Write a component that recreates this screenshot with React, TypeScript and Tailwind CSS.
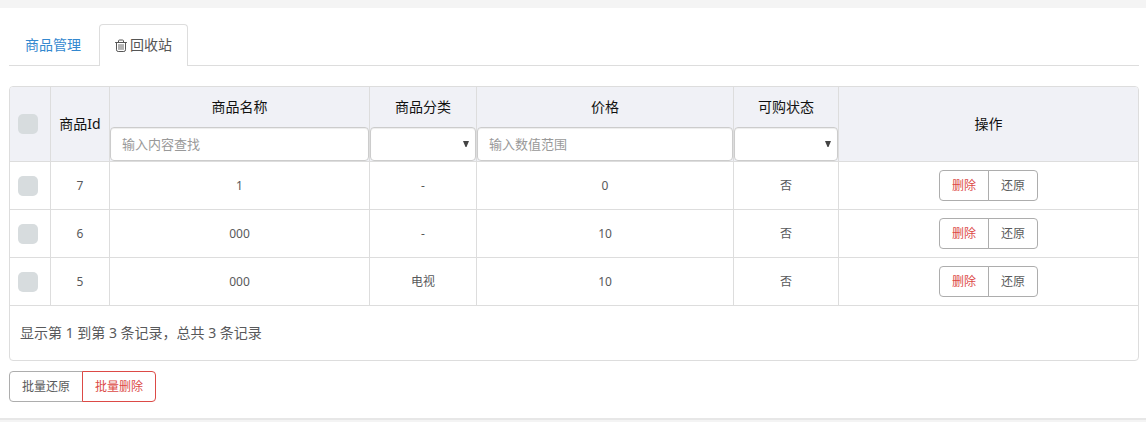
import { useState } from "react";

const goods = [
  { id: 7, name: "1", category: "-", price: 0, sale: "否" },
  { id: 6, name: "000", category: "-", price: 10, sale: "否" },
  { id: 5, name: "000", category: "电视", price: 10, sale: "否" },
];

export default function RecycleBinPage() {
  const [selected, setSelected] = useState<number[]>([]);

  function toggle(id: number) {
    setSelected((ids) => (ids.includes(id) ? ids.filter((i) => i !== id) : [...ids, id]));
  }

  function toggleAll() {
    setSelected((ids) => (ids.length === goods.length ? [] : goods.map((g) => g.id)));
  }

  return (
    <div className="min-h-screen bg-[#f4f4f4] pt-2 font-['Noto_Sans','Noto_Sans_CJK_SC',sans-serif] text-sm text-[#58595b]">
      <main className="border-b-2 border-[#e7e7e7] bg-white pt-4 pr-[7px] pb-4 pl-[9px]">
        <nav className="flex gap-[2px] border-b border-[#ddd]">
          <a href="#goods" className="px-4 pt-[11px] pb-[10px] leading-5 text-[#3388cf]">
            商品管理
          </a>
          <a
            href="#recycle"
            aria-current="page"
            className="-mb-px flex items-center gap-[3px] rounded-t border border-b-0 border-[#ddd] bg-white px-[15px] pt-[10px] pb-[11px] leading-5 text-[#555]"
          >
            <TrashIcon />
            回收站
          </a>
        </nav>

        <div className="mt-5 overflow-hidden rounded border border-[#ddd]">
          <table className="w-full table-fixed border-separate border-spacing-0 text-center">
            <colgroup>
              <col className="w-[41px]" />
              <col className="w-[59px]" />
              <col className="w-[260px]" />
              <col className="w-[107px]" />
              <col className="w-[257px]" />
              <col className="w-[105px]" />
              <col />
            </colgroup>
            <thead className="bg-[#f0f1f6] text-[#111]">
              <tr>
                <Th>
                  <Checkbox label="全选" checked={selected.length === goods.length} onChange={toggleAll} />
                </Th>
                <Th>商品Id</Th>
                <Th>
                  <FilterInput id="name" label="商品名称" placeholder="输入内容查找" />
                </Th>
                <Th>
                  <FilterSelect id="category" label="商品分类" options={["电视"]} />
                </Th>
                <Th>
                  <FilterInput id="price" label="价格" placeholder="输入数值范围" />
                </Th>
                <Th>
                  <FilterSelect id="sale" label="可购状态" options={["是", "否"]} />
                </Th>
                <Th>操作</Th>
              </tr>
            </thead>
            <tbody className="text-xs">
              {goods.map((item) => (
                <tr key={item.id}>
                  <Td>
                    <Checkbox
                      label={`选择 ${item.id}`}
                      checked={selected.includes(item.id)}
                      onChange={() => toggle(item.id)}
                    />
                  </Td>
                  <Td>{item.id}</Td>
                  <Td>{item.name}</Td>
                  <Td>{item.category}</Td>
                  <Td>{item.price}</Td>
                  <Td>{item.sale}</Td>
                  <Td>
                    <div className="flex justify-center py-2">
                      <button
                        type="button"
                        className="rounded-l border border-[#adadad] px-3 py-[6px] leading-[17px] text-[#dc4a46]"
                      >
                        删除
                      </button>
                      <button
                        type="button"
                        className="-ml-px rounded-r border border-[#adadad] px-3 py-[6px] leading-[17px]"
                      >
                        还原
                      </button>
                    </div>
                  </Td>
                </tr>
              ))}
            </tbody>
          </table>
          <p className="px-[10px] py-[17px] leading-5">显示第 1 到第 3 条记录，总共 3 条记录</p>
        </div>

        <div className="mt-[10px] flex text-xs">
          <button type="button" className="rounded-l border border-[#adadad] px-3 py-[6px] leading-[17px]">
            批量还原
          </button>
          <button
            type="button"
            className="-ml-px rounded-r border border-[#dc4a46] px-3 py-[6px] leading-[17px] text-[#dc4a46]"
          >
            批量删除
          </button>
        </div>
      </main>
    </div>
  );
}

function TrashIcon() {
  return (
    <svg viewBox="0 0 12 13" className="h-[13px] w-3 fill-none stroke-[#555]" strokeLinecap="round">
      <path d="M.5 3.5h11M3.5 3.3V2Q3.5 1 4.5 1h3Q8.5 1 8.5 2v1.3" />
      <path d="M1.5 3.5v7.3q0 1.7 1.7 1.7h5.6q1.7 0 1.7-1.7V3.5" />
      <path d="M4 5.5v5M6 5.5v5M8 5.5v5" strokeWidth=".9" />
    </svg>
  );
}

function Th({ children }: { children: React.ReactNode }) {
  return <th className="border-r border-b border-[#ddd] p-0 font-normal last:border-r-0">{children}</th>;
}

function Td({ children }: { children: React.ReactNode }) {
  return <td className="border-r border-b border-[#ddd] p-0 last:border-r-0">{children}</td>;
}

function Checkbox({ label, checked, onChange }: { label: string; checked: boolean; onChange: () => void }) {
  return (
    <input
      type="checkbox"
      aria-label={label}
      checked={checked}
      onChange={onChange}
      className="ml-2 block size-5 appearance-none rounded-[5px] bg-[#d7dcde] checked:bg-[#1abc9c]"
    />
  );
}

function FilterInput({ id, label, placeholder }: { id: string; label: string; placeholder: string }) {
  return (
    <>
      <label htmlFor={id} className="block h-10 leading-10">
        {label}
      </label>
      <input
        id={id}
        placeholder={placeholder}
        className="block h-[34px] w-full rounded border border-[#ccc] bg-white px-[11px] text-[13px] text-[#555] shadow-[inset_0_1px_1px_rgba(0,0,0,.075)] outline-none placeholder:text-[#999]"
      />
    </>
  );
}

function FilterSelect({ id, label, options }: { id: string; label: string; options: string[] }) {
  return (
    <>
      <label htmlFor={id} className="block h-10 leading-10">
        {label}
      </label>
      <div className="relative">
        <select
          id={id}
          className="block h-[34px] w-full appearance-none rounded border border-[#ccc] bg-white px-[11px] text-[13px] text-[#555] shadow-[inset_0_1px_1px_rgba(0,0,0,.075)] outline-none"
        >
          <option value="" />
          {options.map((option) => (
            <option key={option}>{option}</option>
          ))}
        </select>
        <svg
          viewBox="0 0 6 6"
          className="pointer-events-none absolute top-[14px] right-[7px] size-[6px] fill-[#444]"
        >
          <path d="M0 0h6L3.5 6h-1z" />
        </svg>
      </div>
    </>
  );
}
